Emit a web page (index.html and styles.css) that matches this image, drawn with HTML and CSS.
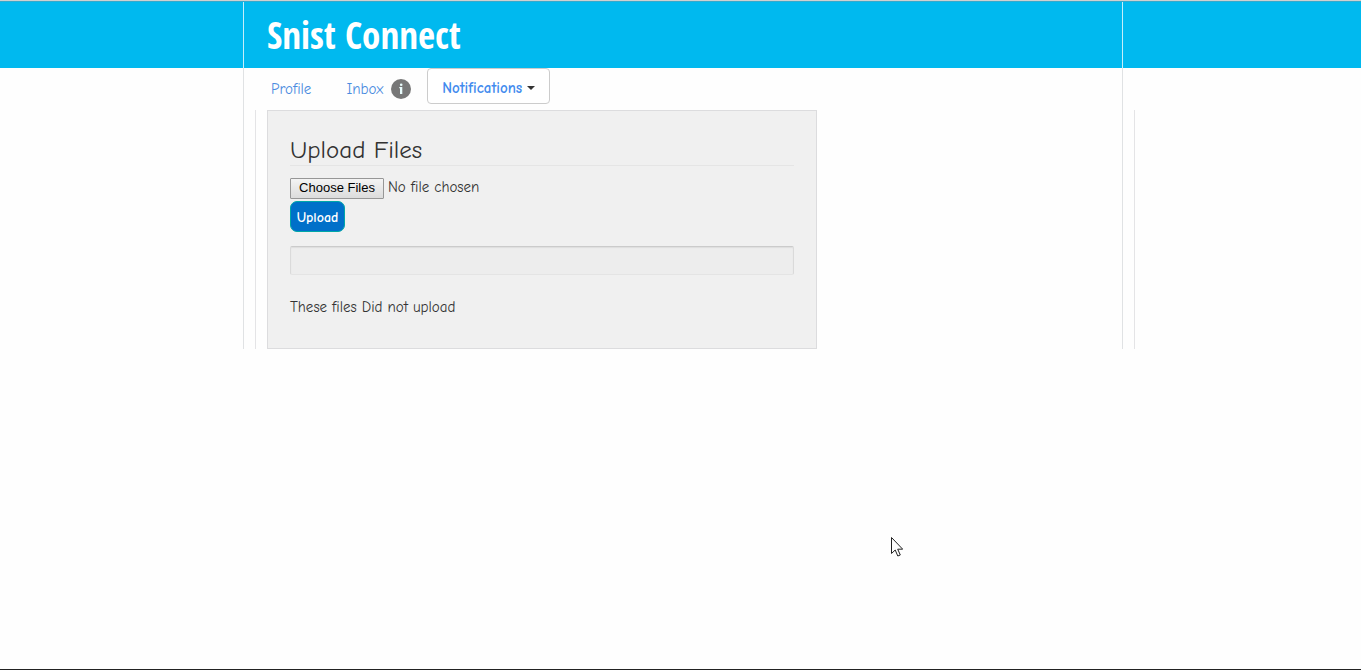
FILE: index.html
```html
<!DOCTYPE html>
<html lang="en">
<head>
<meta charset="utf-8">
<title>Snist Connect</title>
<link rel="stylesheet" href="styles.css">
</head>
<body>
<header class="banner">
  <div class="column banner-inner"><h1 class="brand">Snist Connect</h1></div>
</header>
<div class="page">
  <main class="column">
    <nav class="tabs">
      <a class="tab" href="#profile">Profile</a>
      <a class="tab" href="#inbox">Inbox
        <svg class="info" viewBox="0 0 20 20" aria-hidden="true"><circle cx="10" cy="10" r="10" fill="#777"/><path d="M8.300 8h3v7H9V9.300h-.7z" fill="#e8fbfb"/><circle cx="10.200" cy="5.700" r="1.300" fill="#e8fbfb"/></svg>
      </a>
      <button class="notify" type="button">Notifications <span class="caret"></span></button>
    </nav>
    <div class="content">
      <form class="panel">
        <h2 class="title">Upload Files</h2>
        <input class="file" type="file" multiple aria-label="Files to upload">
        <button class="upload" type="button">Upload</button>
        <progress class="meter" value="0" max="100" aria-label="Upload progress"></progress>
        <p class="message">These files Did not upload</p>
      </form>
    </div>
  </main>
</div>
<svg class="pointer" viewBox="0 0 12 20" aria-hidden="true"><path d="M.5.500v16l3.700-3.500 2.600 6 2.500-1-2.600-5.800h5z" fill="#fff" stroke="#222"/></svg>
</body>
</html>
```
FILE: styles.css
```css
* {
  box-sizing: border-box;
}

body {
  margin: 0;
  min-height: 100vh;
  border-top: 1px solid #d0d0d0;
  border-bottom: 1px solid #222;
  background: #fefefe;
  color: #333;
  font: 15px/20px "Comic Neue", Lato, sans-serif;
}

.banner,
.page {
  padding-left: 5px;
}

.banner {
  border-top: 1px solid #35a9cc;
  background: #00b9ef;
}

.column {
  max-width: 880px;
  margin: 0 auto;
  border: solid #e0e2e4;
  border-width: 0 1px;
}

.banner-inner {
  height: 66px;
  padding-left: 23px;
  border-color: #c5eefa;
}

.brand {
  margin: 0;
  color: #fff;
  font: bold 37px/66px "Open Sans Condensed", "Roboto Condensed", "Noto Sans", sans-serif;
}

.tabs {
  display: flex;
  height: 42px;
  padding-left: 27px;
}

.tab {
  display: flex;
  height: 42px;
  align-items: center;
  gap: 8px;
  margin-right: 35px;
  color: #4a8be0;
  text-decoration: none;
}

.info {
  width: 20px;
  height: 20px;
}

.tab + .tab {
  margin-right: 16px;
}

.notify {
  display: flex;
  align-items: center;
  justify-content: center;
  gap: 5px;
  width: 123px;
  height: 36px;
  padding: 4px 0 0;
  border: 1px solid #ccc;
  border-radius: 4px;
  background: #fff;
  color: #428bee;
  font: bold 15px/20px "Comic Neue", Lato, sans-serif;
}

.caret {
  border: 4px solid transparent;
  border-top-color: #333;
  border-bottom: 0;
}

.content {
  margin: 0 -13px 0 11px;
  padding-left: 11px;
  border: solid #e4e4e6;
  border-width: 0 1px;
}

.panel {
  display: flex;
  flex-direction: column;
  align-items: flex-start;
  max-width: 550px;
  padding: 24px 22px 31px;
  border: 1px solid #dcdcde;
  background: #f0f0f0;
}

.title {
  width: 100%;
  margin: 0 0 11px;
  border-bottom: 1px solid #e5e5e5;
  font-size: 25px;
  font-weight: normal;
  line-height: 30px;
}

.file {
  width: 100%;
  height: 22px;
  margin-bottom: 2px;
  font: inherit;
}

.file::file-selector-button {
  width: 94px;
  height: 21px;
  padding: 0;
  border: 1px solid #979797;
  border-radius: 1px;
  background: linear-gradient(#f4f4f4, #dcdcdc);
  color: #000;
  font: 13px/18px "Liberation Sans", sans-serif;
}

.upload {
  width: 55px;
  height: 31px;
  margin-bottom: 14px;
  padding: 2px 0 0;
  border: 1px solid #00a7a8;
  border-radius: 7px;
  background: #0070c9;
  color: #fff;
  font: bold 14px/20px "Comic Neue", Lato, sans-serif;
}

.meter {
  appearance: none;
  width: 100%;
  height: 29px;
  border: 1px solid #dadada;
  border-top-color: #cbcbcb;
  border-bottom-color: #e4e4e4;
  border-radius: 2px;
  background: #ededed;
  box-shadow: inset 0 1px 1px #ddd;
}

.meter::-webkit-progress-bar {
  background: transparent;
}

.message {
  margin: 22px 0 0;
}

.pointer {
  position: absolute;
  top: 537px;
  left: 891px;
  width: 12px;
  height: 20px;
}
```
